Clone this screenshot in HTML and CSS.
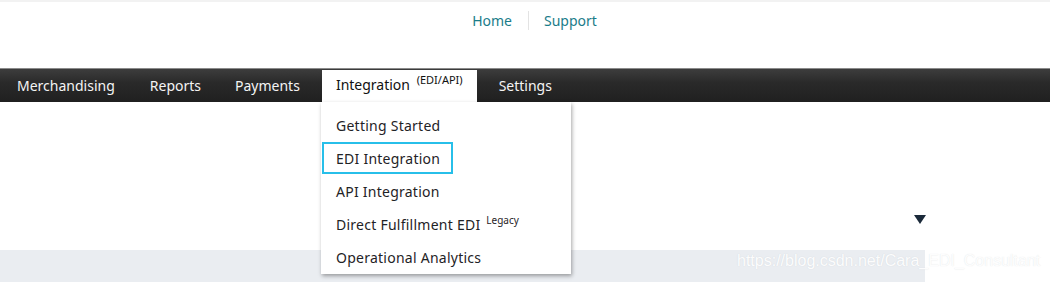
FILE: index.html
```html
<!DOCTYPE html>
<html lang="en">
  <head>
    <meta charset="UTF-8" />
    <meta name="viewport" content="width=device-width, initial-scale=1.0" />
    <title>Vendor Central - Integration</title>
    <link rel="stylesheet" href="styles.css">
  </head>
  <body>
    <div class="top">
      <a class="top-link" href="#">Home</a>
      <span class="top-sep"></span>
      <a class="top-link" href="#">Support</a>
    </div>

    <div class="nav">
      <div class="nav-item first">Merchandising</div>
      <div class="nav-item">Reports</div>
      <div class="nav-item">Payments</div>
      <div class="nav-item active">Integration <sup>(EDI/API)</sup></div>
      <div class="nav-item">Settings</div>

      <ul class="menu">
        <li>Getting Started</li>
        <li><span class="picked">EDI Integration</span></li>
        <li>API Integration</li>
        <li>Direct Fulfillment EDI <sup>Legacy</sup></li>
        <li>Operational Analytics</li>
      </ul>
    </div>

    <div class="content">
      <div class="caret-row">
        <svg class="caret" width="12" height="9" viewBox="0 0 12 9">
          <path d="M0 0 H12 L6 9 Z" fill="#1b2a3a" />
        </svg>
      </div>
      <div class="band"></div>
      <div class="watermark">https://blog.csdn.net/Cara_EDI_Consultant</div>
    </div>
  </body>
</html>
```

FILE: styles.css
```css
body {
  margin: 0;
  font-family: "Noto Sans", Arial, sans-serif;
  background-color: white;
  width: 1050px;
  height: 282px;
  overflow: hidden;
}

.top {
  height: 68px;
  border-top: 2px solid #f2f2f2;
  box-sizing: border-box;
  display: flex;
  justify-content: center;
  align-items: flex-start;
  padding-top: 9px;
  padding-left: 19px;
}

.top-link {
  color: #1a7c89;
  text-decoration: none;
  font-size: 14px;
  line-height: 20px;
}

.top-sep {
  width: 1px;
  height: 19px;
  background-color: #e3e3e3;
  margin: 0 15px 0 16px;
}

.nav {
  position: relative;
  height: 34px;
  display: flex;
  align-items: flex-end;
  background: linear-gradient(#3d3d3d, #2a2a2a 40%, #202020);
  border-top: 1px solid #8a8a8a;
  box-sizing: border-box;
}

.nav-item {
  color: #f4f4f4;
  font-size: 14px;
  height: 32px;
  line-height: 32px;
  padding: 0 17px;
}

.nav-item.first {
  padding-left: 17px;
  padding-right: 18px;
}

.nav-item.active {
  background-color: white;
  color: #111;
  padding: 0 14px 0 14px;
  margin: 0 5px 0 5px;
  line-height: 30px;
}

.nav-item sup,
.menu li sup {
  font-size: 11px;
  line-height: 0;
  vertical-align: baseline;
  position: relative;
  top: -6px;
  margin-left: 3px;
}

.menu {
  position: absolute;
  left: 321px;
  top: 33px;
  width: 250px;
  margin: 0;
  padding: 7px 0 0 0;
  list-style: none;
  background-color: white;
  box-shadow: 1px 2px 4px rgba(0, 0, 0, 0.35);
  z-index: 2;
}

.menu li {
  height: 33px;
  line-height: 33px;
  padding-left: 15px;
  font-size: 14px;
  letter-spacing: 0.25px;
  color: #1f2326;
}

.menu li sup {
  font-size: 10px;
  letter-spacing: 0;
  margin-left: 2px;
}

.menu .picked {
  display: inline-block;
  margin-left: -14px;
  padding-left: 12px;
  box-sizing: border-box;
  width: 131px;
  height: 32px;
  line-height: 30px;
  border: 2px solid #27bfe9;
}

.content {
  position: relative;
  height: 180px;
}

.caret-row {
  height: 148px;
  display: flex;
  justify-content: flex-end;
  align-items: flex-start;
  padding-right: 124px;
}

.caret {
  margin-top: 113px;
}

.band {
  width: 925px;
  height: 32px;
  background-color: #eaedf1;
}

.watermark {
  position: absolute;
  left: 737px;
  top: 150px;
  font-family: "Liberation Sans", Arial, sans-serif;
  font-size: 16px;
  color: rgba(255, 255, 255, 0.95);
  text-shadow: 0 0 1px rgba(150, 160, 170, 0.3);
}
```
